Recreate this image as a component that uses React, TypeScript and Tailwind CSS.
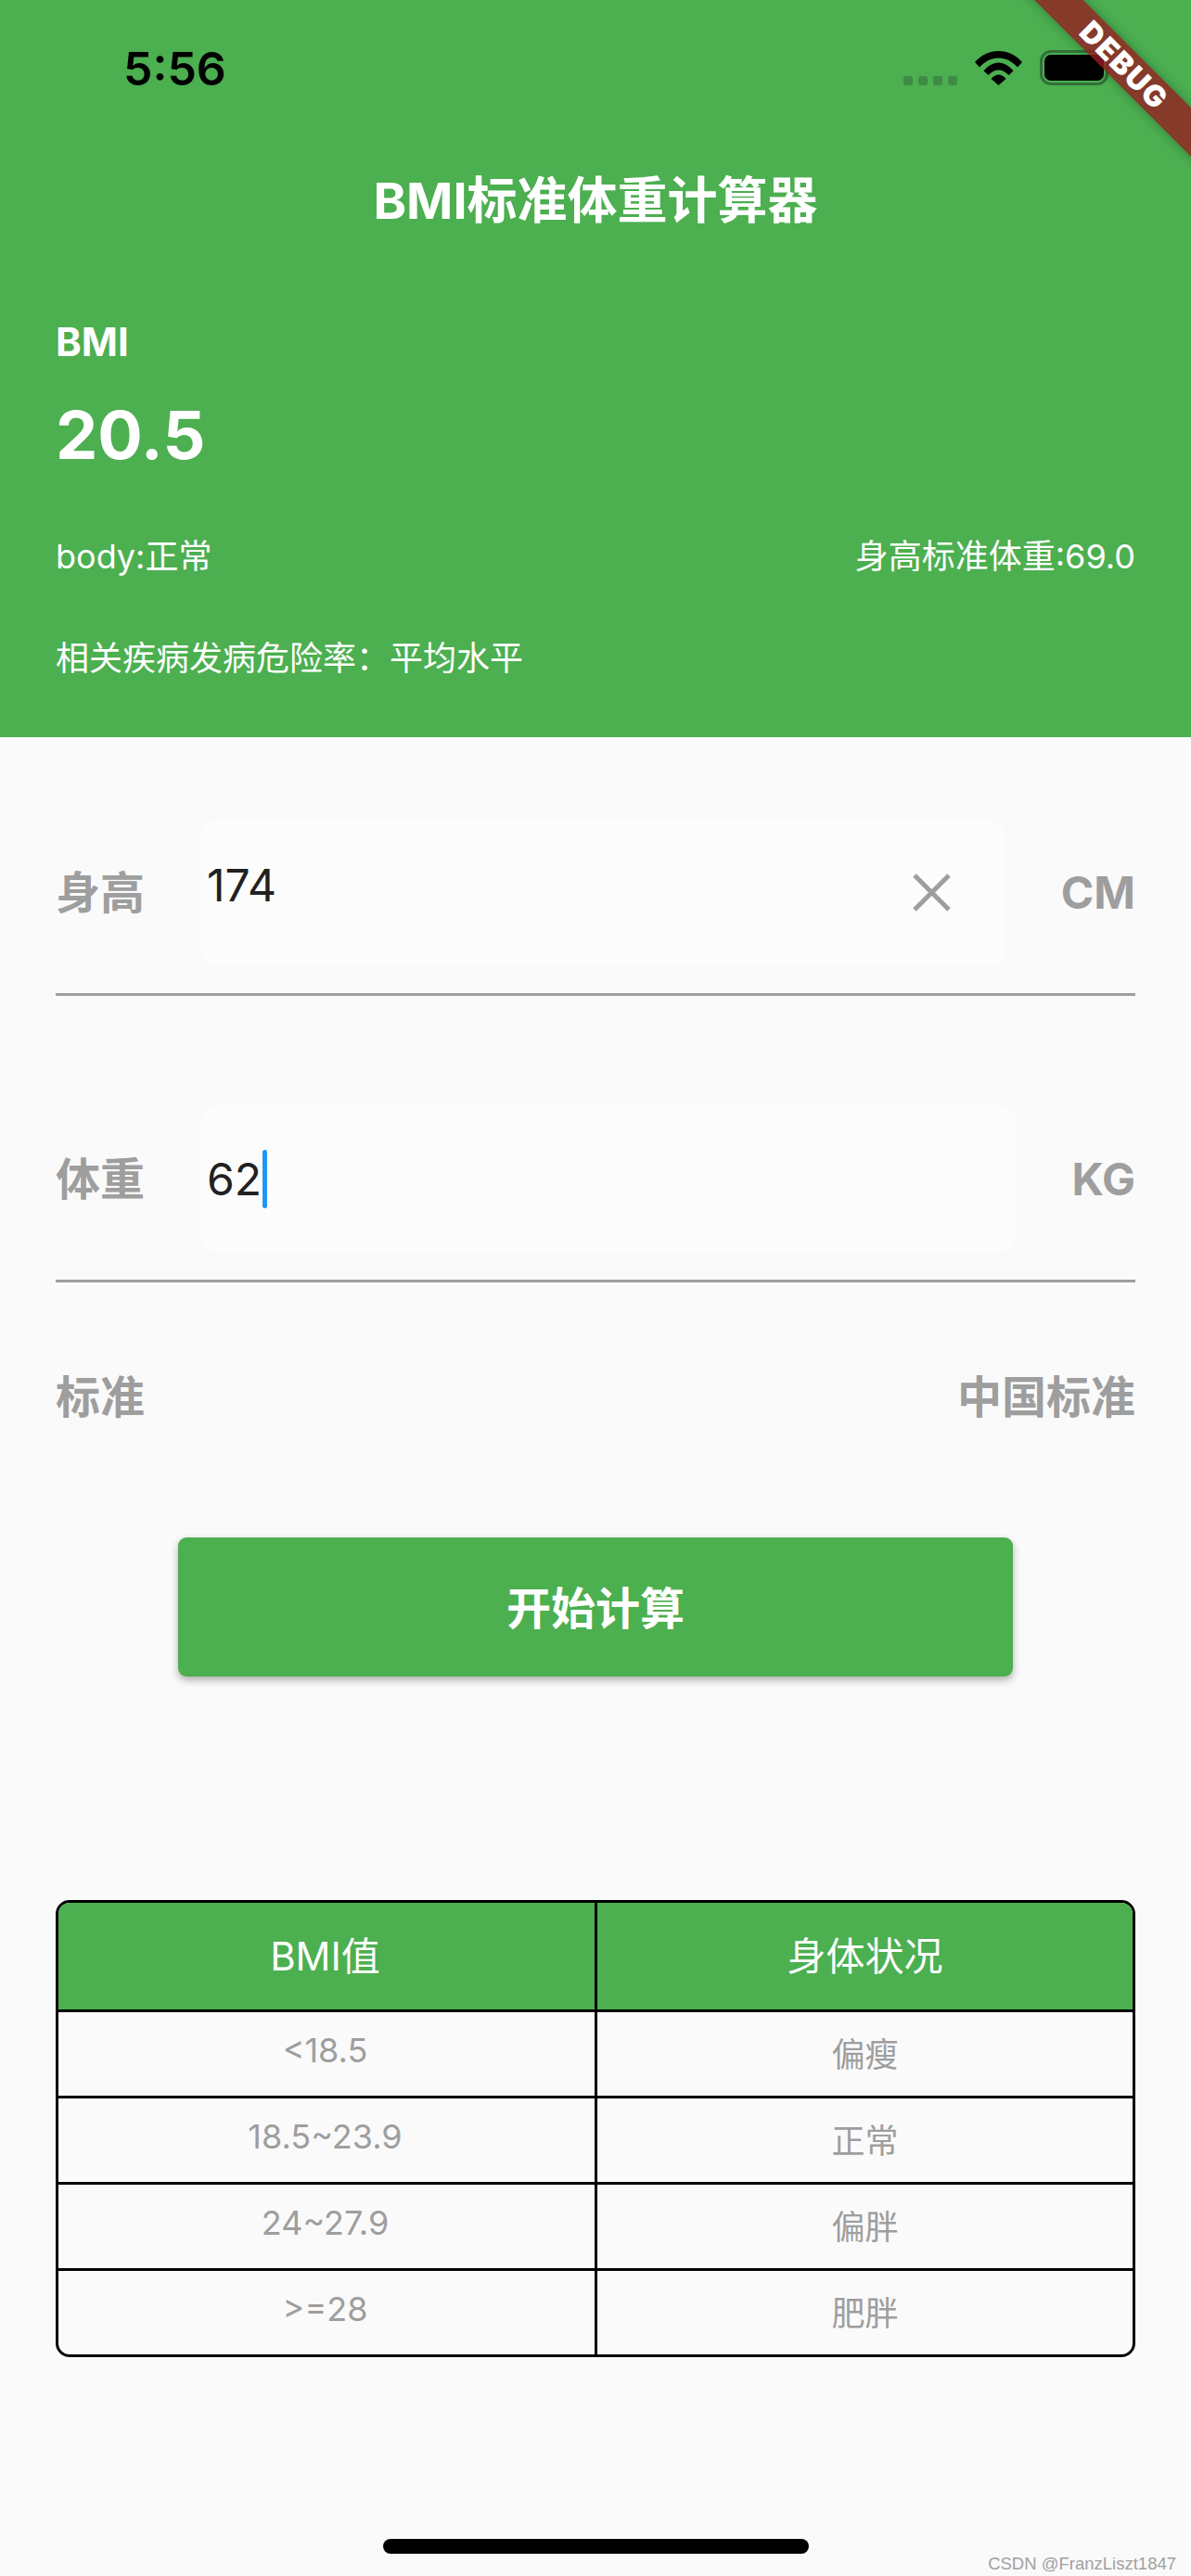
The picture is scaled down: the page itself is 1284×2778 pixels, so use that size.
const font = "font-['Inter','Noto_Sans_CJK_SC',sans-serif]"

const rows = [
  ["<18.5", "偏瘦"],
  ["18.5~23.9", "正常"],
  ["24~27.9", "偏胖"],
  [">=28", "肥胖"],
]

function Wifi() {
  return (
    <svg width="51" height="37" viewBox="0 0 51 37" fill="#000">
      <path d="M0 12C7 4 16 0 25.5 0S44 4 51 12L46 17.5C40 11 33 7.5 25.5 7.5S11 11 5 17.5Z" />
      <path d="M9.5 21.5C14 16 19.5 12.5 25.5 12.5S37 16 41.5 21.5L36.5 26C33 22.5 29.5 20.5 25.5 20.5S18 22.5 14.5 26Z" />
      <path d="M17.5 30C20 27 23 25.5 25.5 25.5S31 27 33.5 30L25.5 37Z" />
    </svg>
  )
}

function Field({ label, value, unit, clear, caret }: { label: string; value: string; unit: string; clear?: boolean; caret?: boolean }) {
  return (
    <div>
      <div className="flex items-center">
        <div className="w-[157px] text-[48px] font-bold text-[#9e9e9e] leading-none">{label}</div>
        <div className="flex-1 h-[157px] rounded-[18px] bg-[#fcfcfc] flex items-center justify-between pl-[6px] pr-[59px]">
          <div className="flex items-center">
            <span className={clear ? "text-[48px] leading-none text-[#212121] -mt-[16px]" : "text-[48px] leading-none text-[#212121]"}>{value}</span>
            {caret && <span className="w-[5px] h-[63px] rounded-full bg-[#2196f3] ml-[1px]" />}
          </div>
          {clear && (
            <svg width="41" height="41" viewBox="0 0 41 41" stroke="#9e9e9e" strokeWidth="5">
              <path d="M2 2L39 39M39 2L2 39" />
            </svg>
          )}
        </div>
        <div className="ml-[60px] text-[48px] font-bold text-[#9e9e9e] leading-none">{unit}</div>
      </div>
      <div className="h-[3px] bg-[#9e9e9e] mt-[30px]" />
    </div>
  )
}

export default function App() {
  return (
    <div className={`${font} relative w-[1284px] h-[2778px] overflow-hidden bg-[#fafafa]`}>
      <div className="h-[795px] bg-[#4caf50] text-white px-[60px]">
        <div className="-mx-[60px] flex items-center justify-between h-[38px] pt-[54px] box-content pl-[133px] pr-[89px]">
          <span className="text-[50px] font-semibold leading-none text-black mt-[2px]">5:56</span>
          <div className="flex items-end gap-[19px]">
            <div className="flex gap-[6px]">
              <span className="w-[10px] h-[10px] rounded-[3px] bg-[#3f8a44]" />
              <span className="w-[10px] h-[10px] rounded-[3px] bg-[#3f8a44]" />
              <span className="w-[10px] h-[10px] rounded-[3px] bg-[#3f8a44]" />
              <span className="w-[10px] h-[10px] rounded-[3px] bg-[#3f8a44]" />
            </div>
            <Wifi />
            <div className="w-[74px] h-[38px] rounded-[12px] border-[3px] border-[#34703a] p-[2px]">
              <div className="w-full h-full rounded-[7px] bg-black" />
            </div>
          </div>
        </div>
        <div className="h-[168px] mt-[40px] flex items-center justify-center text-[54px] font-bold">BMI标准体重计算器</div>
        <div className="mt-[43px] h-[50px] flex items-center text-[42px] font-bold">BMI</div>
        <div className="mt-[31px] h-[90px] flex items-center text-[72px] font-bold">20.5</div>
        <div className="mt-[61px] h-[50px] flex items-center justify-between text-[36px]">
          <span>body:正常</span>
          <span>身高标准体重:69.0</span>
        </div>
        <div className="mt-[60px] h-[50px] flex items-center text-[36px]">相关疾病发病危险率：平均水平</div>
      </div>

      <div className="px-[60px] pt-[89px]">
        <Field label="身高" value="174" unit="CM" clear />
        <div className="h-[119px]" />
        <Field label="体重" value="62" unit="KG" caret />
        <div className="mt-[94px] h-[60px] flex items-center justify-between text-[48px] font-bold text-[#9e9e9e]">
          <span>标准</span>
          <span>中国标准</span>
        </div>
        <div className="mt-[121px] ml-[132px] w-[900px] h-[150px] rounded-[9px] bg-[#4caf50] shadow-[0_4px_8px_rgba(0,0,0,0.3)] flex items-center justify-center text-white text-[48px] font-bold pt-[3px]">
          开始计算
        </div>

        <div className="mt-[241px] border-[3px] border-black rounded-[15px] overflow-hidden">
          <div className="grid grid-cols-[581px_1fr] h-[118px] bg-[#4caf50] text-white text-[42px] border-b-[3px] border-black">
            <div className="flex items-center justify-center border-r-[3px] border-black pr-[3px]">BMI值</div>
            <div className="flex items-center justify-center">身体状况</div>
          </div>
          {rows.map((r, i) => (
            <div key={r[0]} className={i < 3 ? "grid grid-cols-[581px_1fr] h-[93px] text-[36px] text-[#9e9e9e] border-b-[3px] border-black" : "grid grid-cols-[581px_1fr] h-[90px] text-[36px] text-[#9e9e9e]"}>
              <div className="flex items-center justify-center border-r-[3px] border-black pb-[8px] pr-[3px]">{r[0]}</div>
              <div className="flex items-center justify-center pt-[2px]">{r[1]}</div>
            </div>
          ))}
        </div>
      </div>

      {/* debug banner */}
      <div className="absolute left-[1012px] top-[52px] w-[400px] h-[37px] rotate-45 bg-[#931d20]/80 shadow-[0_0_12px_rgba(0,0,0,0.3)] flex items-center justify-center text-white text-[32px] font-black tracking-[1.5px]">
        DEBUG
      </div>

      <div className="absolute left-[413px] top-[2738px] w-[459px] h-[16px] rounded-full bg-black" />
      <div className="absolute right-[16px] top-[2751px] text-[18.5px] text-[#a0a0a0] font-['Liberation_Sans',sans-serif]">CSDN @FranzLiszt1847</div>
    </div>
  )
}
